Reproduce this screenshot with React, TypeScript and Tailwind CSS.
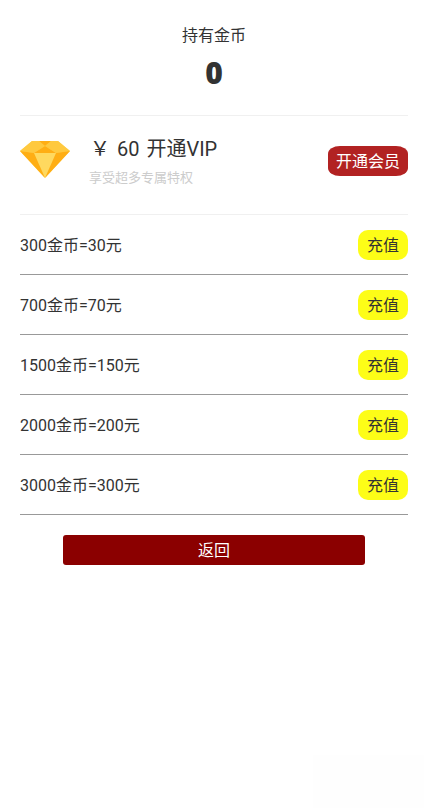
import React from 'react';

const plans = [
  { coins: 300, price: 30 },
  { coins: 700, price: 70 },
  { coins: 1500, price: 150 },
  { coins: 2000, price: 200 },
  { coins: 3000, price: 300 },
];

function Diamond() {
  return (
    <svg width="50" height="37" viewBox="0 0 50 37" className="mt-[5px] shrink-0">
      <polygon points="12,0 38,0 50,10 25,37 0,10" fill="#ffd95f" />
      <polygon points="12,0 19,0 25,5 14,12 0,10" fill="#ffc93f" />
      <polygon points="38,0 31,0 25,5 36,12 50,10" fill="#ffc93f" />
      <polygon points="19,0 31,0 25,5" fill="#ffae14" />
      <polygon points="14,12 25,5 36,12" fill="#ffae14" />
      <polygon points="0,10 14,12 25,37" fill="#ffae14" />
      <polygon points="50,10 36,12 25,37" fill="#ffae14" />
    </svg>
  );
}

export default function App() {
  return (
    <div className="relative min-h-[808px] bg-white pl-5 pr-4 text-[#333] font-['Roboto','Noto_Sans_CJK_SC',sans-serif]">
      {/* balance */}
      <div className="flex h-[116px] flex-col items-center border-b border-[#f0f0f0] pt-[25px]">
        <div className="text-base leading-[22px]">持有金币</div>
        <div className="mt-[9px] text-[30px] leading-[34px] font-extrabold font-['Open_Sans',sans-serif]">0</div>
      </div>

      {/* vip */}
      <div className="flex h-[99px] items-start justify-between border-b border-[#f0f0f0] pt-5">
        <div className="flex items-start">
          <Diamond />
          <div className="ml-[19px] -mt-[1px]">
            <div className="pl-[1px] text-xl leading-7 whitespace-pre [word-spacing:2px]">￥ 60 开通VIP</div>
            <div className="mt-[5px] text-[13px] leading-5 text-[#ccc]">享受超多专属特权</div>
          </div>
        </div>
        <button className="mt-[10px] h-[30px] w-20 rounded-[12px/8px] bg-[#b22222] pt-[2px] text-base text-white">
          开通会员
        </button>
      </div>

      {/* recharge plans */}
      {plans.map((plan) => (
        <div key={plan.coins} className="flex h-[60px] items-center justify-between border-b border-[#999]">
          <span className="pt-[2px] text-base">{plan.coins}金币={plan.price}元</span>
          <button className="h-[30px] w-[50px] rounded-[10px] bg-[#fdfd17] pt-[2px] text-base">充值</button>
        </div>
      ))}

      <div className="mt-5 flex justify-center">
        <button className="h-[30px] w-[302px] rounded-[3px] bg-[#8b0000] pt-[2px] text-base text-white">返回</button>
      </div>

      {/* faint patch in the corner */}
      <div className="absolute bottom-0 right-0 h-[53px] w-[111px] bg-[#fefefe]" />
    </div>
  );
}
